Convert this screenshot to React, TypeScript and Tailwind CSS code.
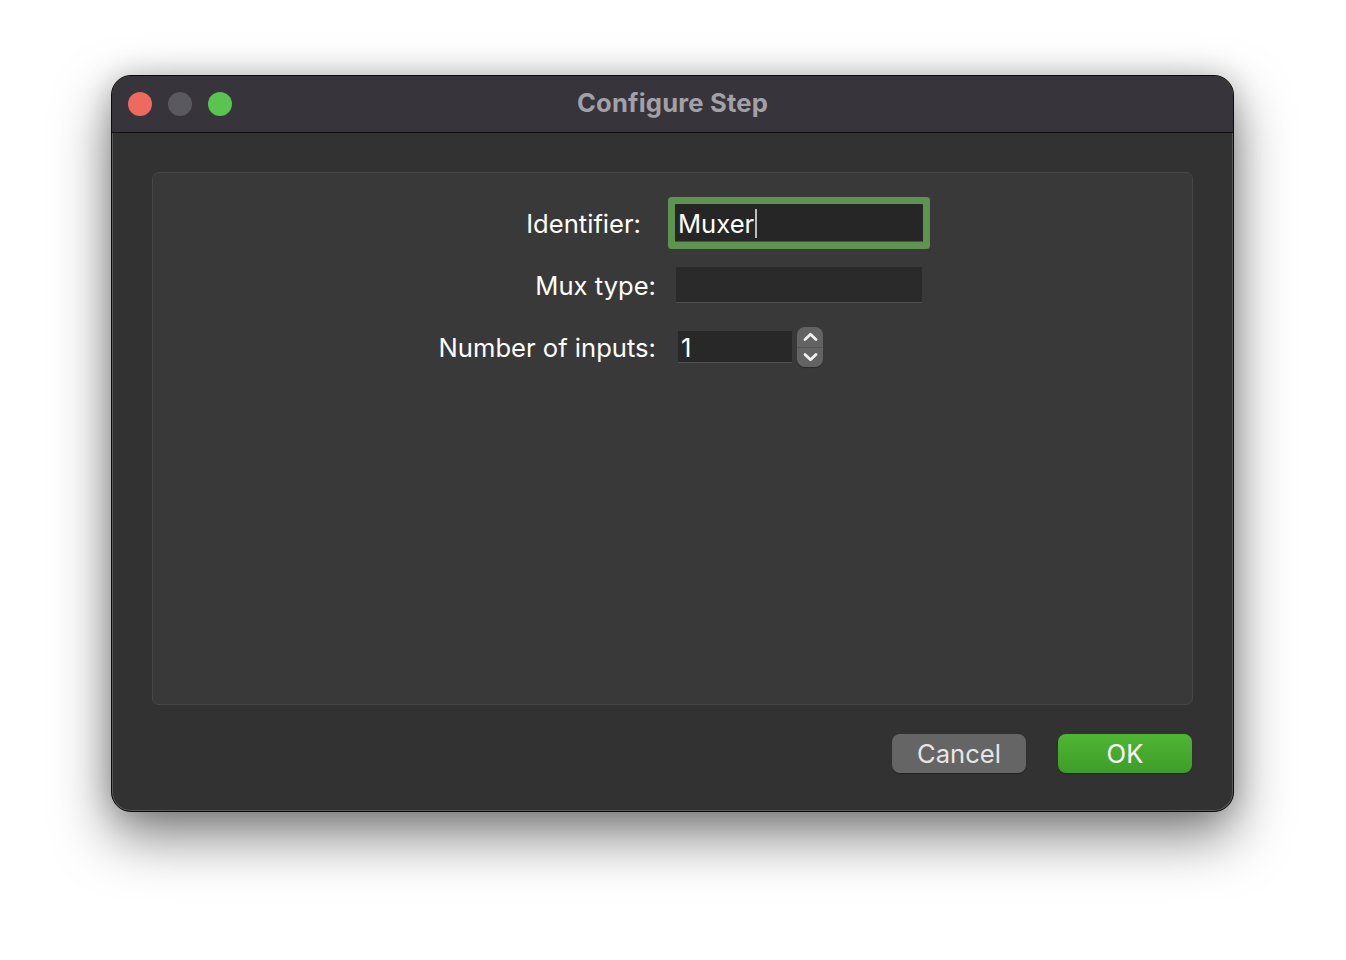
import React from "react";

const font = { fontFamily: "Inter, 'Noto Sans', 'Liberation Sans', sans-serif" };

export default function App() {
  return (
    <div className="w-[1346px] h-[960px] bg-white overflow-hidden" style={font}>
      <div className="ml-[111px] mt-[75px] w-[1123px] h-[737px] rounded-[20px] border border-[#0b0b0b] overflow-hidden bg-[#323232] shadow-[0_24px_55px_rgba(0,0,0,0.5),0_0_28px_rgba(0,0,0,0.18)]">
        <div className="h-full w-full rounded-[19px] shadow-[inset_0_0_0_1px_#5a5a5c] flex flex-col">
          {/* Title bar */}
          <div className="relative h-[57px] shrink-0 bg-[#37343b] border-b border-[#0e0e0e] flex items-center pl-[16px] gap-[16px]">
            <div className="w-[24px] h-[24px] rounded-full bg-[#ee6a5f]" />
            <div className="w-[24px] h-[24px] rounded-full bg-[#5b5960]" />
            <div className="w-[24px] h-[24px] rounded-full bg-[#5ac451]" />
            <div className="absolute inset-0 flex items-center justify-center pointer-events-none pb-[2px]">
              <span className="text-[25.6px] font-bold text-[#a3a1a8] tracking-[0.2px]">Configure Step</span>
            </div>
          </div>
          {/* Body */}
          <div className="flex-1 flex flex-col px-[40px] pt-[39px]">
            <div className="h-[533px] rounded-[7px] border border-[#474747] bg-[#393939] pt-[19px] flex flex-col">
              <div className="h-[62px] flex items-center">
                <div className="w-[503px] text-right pr-[15px] pt-[2px] text-[25.6px] text-white leading-none">Identifier:</div>
                <div className="ml-[19px] w-[248px] h-[38px] bg-[#262626] border-b border-[#4e4e4e] rounded-[1px] shadow-[0_0_0_7px_#5e9450] flex items-center pl-[3px] pt-[2px]">
                  <span className="text-[25.6px] text-white leading-none">Muxer</span>
                  <span className="inline-block w-[1.5px] h-[29px] bg-[#bdbdbd] ml-[1px]" />
                </div>
              </div>
              <div className="h-[62px] flex items-center">
                <div className="w-[503px] text-right pt-[2px] text-[25.6px] text-white leading-none">Mux type:</div>
                <div className="ml-[20px] w-[246px] h-[36px] bg-[#2a2a2a] border-b border-[#505050]" />
              </div>
              <div className="h-[62px] flex items-center">
                <div className="w-[503px] text-right pt-[2px] text-[25.6px] text-white leading-none">Number of inputs:</div>
                <div className="ml-[22px] w-[114px] h-[32px] bg-[#282828] border-b border-[#505050] flex items-center pl-[3px] pt-[2px]">
                  <span className="text-[25.6px] text-white leading-none">1</span>
                </div>
                <div className="ml-[5px] w-[26px] h-[40px] rounded-[8px] bg-[#636363] flex flex-col overflow-hidden shadow-[0_1px_1px_rgba(0,0,0,0.3)]">
                  <div className="flex-1 flex items-center justify-center border-b border-[#545454] pt-[1px]">
                    <svg width="15" height="10" viewBox="0 0 15 10" fill="none">
                      <path d="M2 7.5L7.5 2.2L13 7.5" stroke="#f0f0f0" strokeWidth="2.8" strokeLinecap="round" strokeLinejoin="round" />
                    </svg>
                  </div>
                  <div className="flex-1 flex items-center justify-center pb-[1px]">
                    <svg width="15" height="10" viewBox="0 0 15 10" fill="none">
                      <path d="M2 2.5L7.5 7.8L13 2.5" stroke="#f0f0f0" strokeWidth="2.8" strokeLinecap="round" strokeLinejoin="round" />
                    </svg>
                  </div>
                </div>
              </div>
            </div>
            <div className="mt-[29px] flex justify-end gap-[32px] pr-[1px]">
              <button className="w-[134px] h-[39px] rounded-[8px] bg-[#656565] text-[25.6px] text-[#e6e6e6] leading-none flex items-center justify-center shadow-[0_1px_1px_rgba(0,0,0,0.35)]">Cancel</button>
              <button className="w-[134px] h-[39px] rounded-[8px] bg-gradient-to-b from-[#4fb634] to-[#3e9d29] text-[25.6px] text-white leading-none flex items-center justify-center shadow-[0_1px_1px_rgba(0,0,0,0.35)]">OK</button>
            </div>
          </div>
        </div>
      </div>
    </div>
  );
}
